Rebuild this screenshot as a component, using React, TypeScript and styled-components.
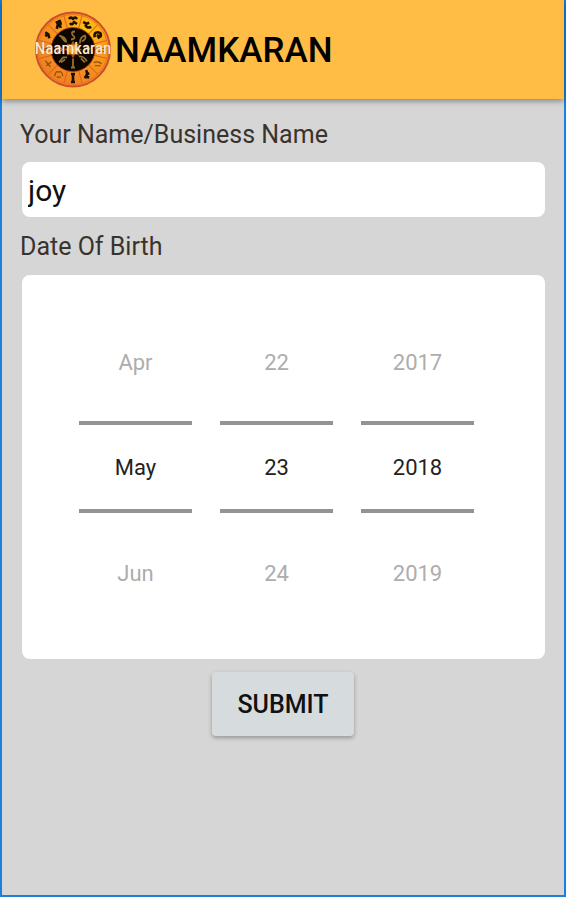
import React, { useState } from "react";
import styled, { createGlobalStyle } from "styled-components";

const GlobalStyle = createGlobalStyle`
  *, *::before, *::after { box-sizing: border-box; }
  body {
    margin: 0;
    background: #ffffff;
    font-family: Roboto, "Liberation Sans", sans-serif;
    color: #000000;
  }
  button, input { font-family: inherit; }
`;

const Screen = styled.div`
  display: flex;
  flex-direction: column;
  min-height: calc(100vh - 3px);
  background: #d6d6d6;
  border: solid #1b7fdc;
  border-width: 0 2px 2px;
`;

const Header = styled.header`
  display: flex;
  align-items: center;
  gap: 3px;
  padding: 11px 32px;
  background: #ffbd45;
  box-shadow: 0 2px 6px rgba(0, 0, 0, 0.4);
`;

const Logo = styled.div`
  position: relative;
  flex: none;
  width: 78px;
  height: 77px;

  svg { display: block; width: 100%; height: 100%; }
`;

const LogoName = styled.span`
  position: absolute;
  inset: 0;
  display: flex;
  align-items: center;
  justify-content: center;
  padding-bottom: 4px;
  font-family: "Roboto Condensed", "Liberation Sans Narrow", Roboto, sans-serif;
  font-size: 17px;
  line-height: 20px;
  color: #fff0d8;
  text-shadow: 0 0 1px #b9744c;
`;

const Title = styled.h1`
  margin: 0;
  padding-top: 2px;
  font-size: 35px;
  line-height: 40px;
  font-weight: 500;
`;

const Form = styled.form`
  display: flex;
  flex-direction: column;
  padding: 20px 18px;
`;

const Label = styled.label`
  font-size: 25px;
  line-height: 32px;
  color: #39332e;
`;

const NameInput = styled.input`
  height: 55px;
  margin: 11px 1px 14px 2px;
  padding: 2px 6px 0;
  border: 0;
  border-radius: 8px;
  background: #ffffff;
  font-size: 30px;
  color: #111111;
  outline: none;
`;

const DatePanel = styled.div`
  display: grid;
  grid-template-columns: repeat(3, 113px);
  justify-content: center;
  gap: 28px;
  margin: 12px 1px 0 2px;
  padding: 27px 14px 27px 0;
  border-radius: 8px;
  background: #ffffff;
`;

const Wheel = styled.div`
  display: flex;
  flex-direction: column;
`;

const WheelStep = styled.button`
  height: 119px;
  padding: 2px 0 0;
  border: 0;
  background: transparent;
  font-size: 22px;
  line-height: 28px;
  color: #adadad;
  cursor: pointer;
`;

const WheelValue = styled.input`
  width: 100%;
  height: 92px;
  padding: 0;
  border: solid #939393;
  border-width: 4px 0;
  border-radius: 0;
  background: transparent;
  font-size: 22px;
  text-align: center;
  color: #222222;
  outline: none;
`;

const SubmitButton = styled.button`
  align-self: center;
  height: 64px;
  margin-top: 13px;
  padding: 0 25px;
  border: 0;
  border-radius: 4px;
  background: #d6dbde;
  box-shadow: 0 2px 4px rgba(0, 0, 0, 0.3);
  font-size: 25px;
  font-weight: 500;
  color: #111111;
  cursor: pointer;
`;

const signs = [
  "M-4-2Q-2-5 0-2Q2-5 4-2M-3 2Q-1 5 1 1L4 3",
  "M-4-3L-1-1L2-2M-2 0Q0 4 4 2",
  "M-3 2Q-4-3 0-3Q4-3 3 1L0 3M-1 0L2 1",
  "M-4-1H4M-3 2H3",
  "M-4-1Q0-3 4 0M-3 2H3",
  "M-1-4L0 0L2-1M0 0L-2 3L2 3",
  "M-2-4H2M0-4V4M-2 4H2",
  "M-4 2Q-3-4 0-2Q3-4 4 2M-2 3H2",
  "M-3-3L2 3M3-2L-2 2",
  "M-3-2Q0 1 3-2M-3 2Q0-1 3 2",
  "M-3-3L0-1L1 3M-3 1L-1-1",
  "M-3-2L1-4L2-1L-1 0L-2 4M1 0L2 3",
];

const innerMarks = [
  "M2-4Q-3-4 0 0Q4 3-2 4",
  "M-3 4Q-3-3 2-4Q4-1-1 2",
  "M-3 2Q0-5 3 0",
  "M-4-3Q2-3 4 2M-2-1L2 3",
  "M0-5V4M-2 4H2",
  "M-4 3L0-2L4-2M-2 3L2 0",
  "M-3 0Q0-4 3 0Q0 4-2 1",
  "M-4-4Q3-3 3 3M-2-3L2 2",
];

function ZodiacWheel() {
  return (
    <svg viewBox="0 0 78 77" aria-hidden="true">
      <defs>
        <radialGradient id="ring" cx="68%" cy="25%" r="75%">
          <stop offset="0" stopColor="#ffc40c" />
          <stop offset="0.4" stopColor="#fa9f1c" />
          <stop offset="1" stopColor="#ee8222" />
        </radialGradient>
        <radialGradient id="sun">
          <stop offset="0" stopColor="#ffd95a" />
          <stop offset="1" stopColor="#f08a1c" />
        </radialGradient>
      </defs>
      <g transform="translate(39 38.5)">
        <circle r="37" fill="url(#ring)" stroke="#c9502a" strokeWidth="2" />
        <circle r="35" fill="none" stroke="#ee7421" strokeWidth="1" />
        {signs.map((_, i) => (
          <path key={i} d="M0-22V-35" stroke="#e2601f" strokeWidth="1" transform={`rotate(${i * 30 + 15})`} />
        ))}
        {signs.map((d, i) => {
          const angle = ((i * 30 - 90) * Math.PI) / 180;
          const faint = i === 4 || i === 7 || i === 8 || i === 3 || i === 9;
          return (
            <path
              key={i}
              d={d}
              transform={`translate(${28.5 * Math.cos(angle)} ${28.5 * Math.sin(angle)})`}
              fill="none"
              stroke={faint ? "#8c4b0c" : "#1d0f02"}
              strokeWidth={faint ? 1.2 : 2.6}
              strokeLinejoin="round"
            />
          );
        })}
        <circle r="22" fill="#0c0500" stroke="#a83c10" strokeWidth="0.8" />
        {innerMarks.map((d, i) => {
          const angle = ((i * 45 - 90) * Math.PI) / 180;
          return (
            <path
              key={i}
              d={d}
              transform={`translate(${14 * Math.cos(angle)} ${14 * Math.sin(angle)})`}
              fill="none"
              stroke="#94702f"
              strokeWidth="1.8"
            />
          );
        })}
        <path
          d="M0-9L2-5L6-6L5-2L9 0L5 2L6 6L2 5L0 9L-2 5L-6 6L-5 2L-9 0L-5-2L-6-6L-2-5Z"
          fill="#a8560f"
        />
        <circle r="5" fill="url(#sun)" />
      </g>
    </svg>
  );
}

const months = ["Jan", "Feb", "Mar", "Apr", "May", "Jun", "Jul", "Aug", "Sep", "Oct", "Nov", "Dec"];

interface SpinnerProps {
  label: string;
  id?: string;
  value: number;
  format: (value: number) => string;
  onChange: (value: number) => void;
}

function Spinner({ label, id, value, format, onChange }: SpinnerProps) {
  return (
    <Wheel role="group" aria-label={label}>
      <WheelStep type="button" onClick={() => onChange(value - 1)}>
        {format(value - 1)}
      </WheelStep>
      <WheelValue id={id} aria-label={label} readOnly value={format(value)} />
      <WheelStep type="button" onClick={() => onChange(value + 1)}>
        {format(value + 1)}
      </WheelStep>
    </Wheel>
  );
}

const wrap = (value: number, count: number) => (value + count) % count;

export default function App() {
  const [name, setName] = useState("joy");
  const [month, setMonth] = useState(4);
  const [day, setDay] = useState(22);
  const [year, setYear] = useState(2018);

  return (
    <>
      <GlobalStyle />
      <Screen>
        <Header>
          <Logo>
            <ZodiacWheel />
            <LogoName>Naamkaran</LogoName>
          </Logo>
          <Title>NAAMKARAN</Title>
        </Header>
        <Form onSubmit={(event) => event.preventDefault()}>
          <Label htmlFor="name">Your Name/Business Name</Label>
          <NameInput id="name" value={name} onChange={(event) => setName(event.target.value)} />
          <Label htmlFor="month">Date Of Birth</Label>
          <DatePanel>
            <Spinner
              label="Month"
              id="month"
              value={month}
              format={(value) => months[wrap(value, 12)]}
              onChange={(value) => setMonth(wrap(value, 12))}
            />
            <Spinner
              label="Day"
              value={day}
              format={(value) => String(wrap(value, 31) + 1)}
              onChange={(value) => setDay(wrap(value, 31))}
            />
            <Spinner label="Year" value={year} format={String} onChange={setYear} />
          </DatePanel>
          <SubmitButton type="submit">SUBMIT</SubmitButton>
        </Form>
      </Screen>
    </>
  );
}
